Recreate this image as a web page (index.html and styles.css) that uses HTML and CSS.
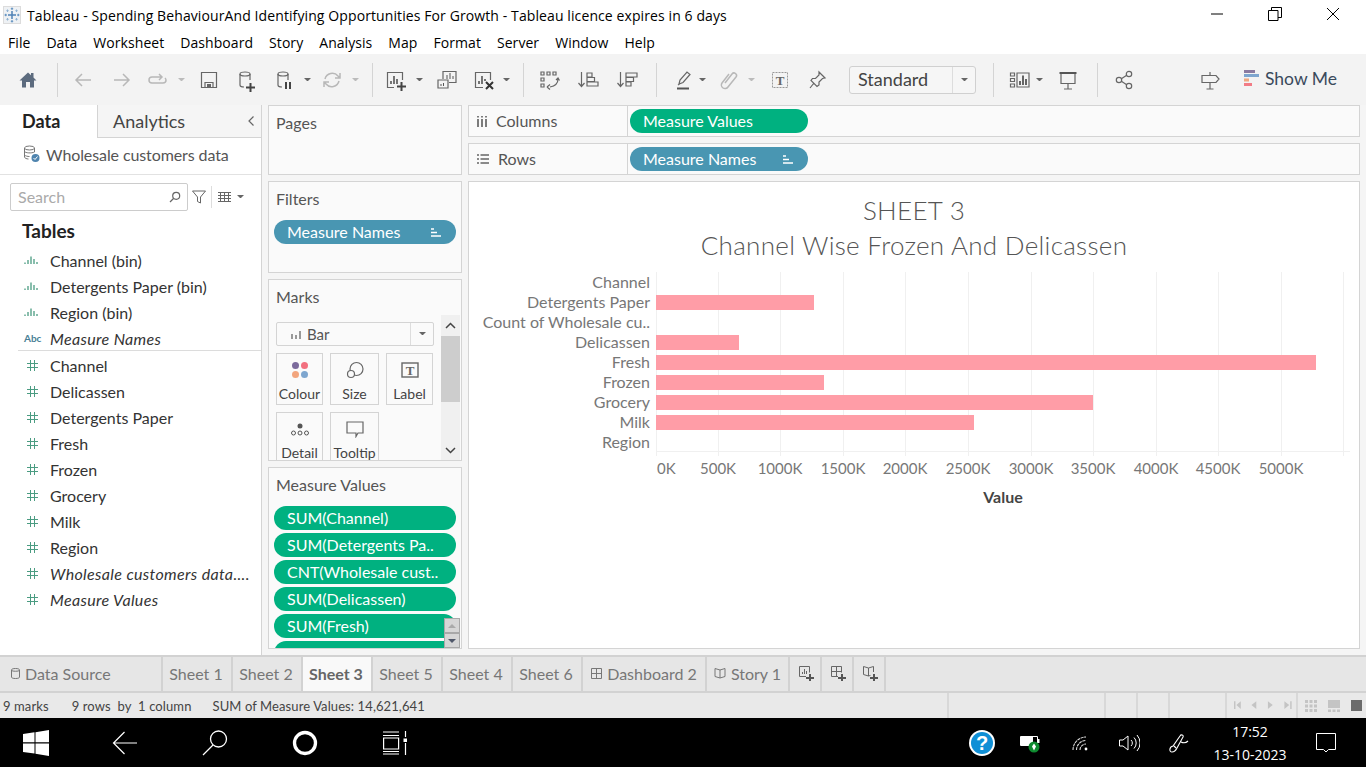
FILE: index.html
```html
<!DOCTYPE html>
<html lang="en">
<head>
  <meta charset="UTF-8">
  <title>Tableau - Spending BehaviourAnd Identifying Opportunities For Growth</title>
  <link rel="stylesheet" href="styles.css">
</head>
<body>
  <header class="titlebar">
    <svg class="app-icon" width="18" height="18" viewBox="0 0 18 18"><rect x="0.5" y="0.5" width="17" height="17" fill="#eef1f4" stroke="#dcdcdc"/><path d="M9 5v8M5 9h8" stroke="#4f81b5" stroke-width="1.500"/><path d="M9 1.500v2.500M7.800 2.700h2.400M9 14v2.500M7.800 15.300h2.400M1.500 9H4M2.700 7.800v2.400M14 9h2.500M15.300 7.800v2.400" stroke="#5f8fbf"/><path d="M4.500 3.500v2.500M3.300 4.700h2.400M13.500 3.500v2.500M12.300 4.700h2.400M4.500 12v2.500M3.300 13.300h2.400M13.500 12v2.500M12.300 13.300h2.400" stroke="#8fb2d3"/></svg>
    <span class="title-text">Tableau - Spending BehaviourAnd Identifying Opportunities For Growth - Tableau licence expires in 6 days</span>
    <div class="win-btns">
      <svg width="14" height="14" viewBox="0 0 14 14"><path d="M1 7h12" stroke="#000" stroke-width="1"/></svg>
      <svg width="14" height="14" viewBox="0 0 14 14"><path d="M.5 3.500h9.500v10H.5zM3.500 3.500V.5h10v10H10" fill="none" stroke="#000"/></svg>
      <svg width="14" height="14" viewBox="0 0 14 14"><path d="M1 1l12 12M13 1L1 13" stroke="#000" stroke-width="1"/></svg>
    </div>
  </header>

  <nav class="menubar">
    <span>File</span><span>Data</span><span>Worksheet</span><span>Dashboard</span><span>Story</span><span>Analysis</span><span>Map</span><span>Format</span><span>Server</span><span>Window</span><span>Help</span>
  </nav>

  <div class="toolbar">
    <svg class="tool ml-16" viewBox="0 0 24 24"><path d="M3.500 12.500L12 4.500l3 2.800V5h2.500v4.600l3 2.900H18V19.500h-4V14h-4v5.500H6v-7z" fill="#5c6b7e"/></svg>
    <i class="sep ml-17"></i>
    <svg class="tool ml-13" viewBox="0 0 24 24"><path d="M20 12H5M11 6l-6 6 6 6" class="st-light"/></svg>
    <svg class="tool ml-15" viewBox="0 0 24 24"><path d="M4 12h15M13 6l6 6-6 6" class="st-light"/></svg>
    <svg class="tool ml-12" viewBox="0 0 24 24"><path d="M15 9H6a3 3 0 0 0 0 6h11a3 3 0 0 0 3-3 3 3 0 0 0-1-2M13 6l3 3-3 3" class="st-light"/></svg>
    <i class="caret caret-light ml-8"></i>
    <svg class="tool ml-9" viewBox="0 0 24 24"><path d="M4.500 4.500h15v15h-15zM8 19.500v-5h8v5" class="st-dark"/><path d="M10 16h4v3.500h-4z" fill="#666"/></svg>
    <svg class="tool ml-14" viewBox="0 0 24 24"><ellipse cx="10" cy="6" rx="5" ry="2" class="st-dark"/><path d="M5 6v11c0 1 1.500 2 4 2M15 6v6" class="st-dark"/><path d="M11 19.500h9M15.500 15v9" stroke="#444" stroke-width="2"/></svg>
    <svg class="tool ml-14" viewBox="0 0 24 24"><ellipse cx="10" cy="6" rx="5" ry="2" class="st-dark"/><path d="M5 6v11c0 1 1.500 2 4 2M15 6v6" class="st-dark"/><path d="M13 14v7M17 14v7" stroke="#444" stroke-width="2"/></svg>
    <i class="caret ml-7"></i>
    <svg class="tool ml-6" viewBox="0 0 24 24"><path d="M5 11a7.500 7.500 0 0 1 13-3l2 2M19 13a7.500 7.500 0 0 1-13 3l-2-2M20 5v5h-5M4 19v-5h5" class="st-light"/></svg>
    <i class="caret caret-light ml-8"></i>
    <i class="sep ml-10"></i>
    <svg class="tool ml-11" viewBox="0 0 24 24"><path d="M10 19.500H3.500v-15h15V12" class="st-dark"/><path d="M7 16v-3M10 16V8M13 16v-5" stroke="#555" stroke-width="1.600"/><path d="M13 18.500h9M17.500 14v9" stroke="#444" stroke-width="2"/></svg>
    <i class="caret ml-8"></i>
    <svg class="tool ml-9" viewBox="0 0 24 24"><path d="M8 11V3.500h13v11h-7" class="st-dark"/><path d="M3 12h10v8H3z" class="st-dark"/><path d="M12 11V7M15 11V5M18 11V8M6 18v-2M8.500 18v-3" stroke="#555"/></svg>
    <svg class="tool ml-13" viewBox="0 0 24 24"><path d="M11 19.500H3.500v-15h15V12" class="st-dark"/><path d="M7 16v-3M10 16V8M13 13v-2" stroke="#555" stroke-width="1.600"/><path d="M14 14l7 7M21 14l-7 7" stroke="#333" stroke-width="2"/></svg>
    <i class="caret ml-7"></i>
    <i class="sep ml-10"></i>
    <svg class="tool ml-13" viewBox="0 0 24 24"><path d="M4 4h3v3H4zM10 4h3v3h-3zM16 4h3v3h-3zM4 10h3v3H4zM4 16h3v3H4z" class="st-dark"/><path d="M21 11c0 4-3 7-8 8M10 19l3-2.500M10 19l3 2.500M19 12l2-2 1.500 2.500" class="st-dark"/></svg>
    <svg class="tool ml-15" viewBox="0 0 24 24"><path d="M5.500 4v14M2.500 15l3 3.500 3-3.500" class="st-dark"/><path d="M11 5h5v4h-5zM11 9.500h7.500v4H11zM11 14h11v4H11z" class="st-dark"/></svg>
    <svg class="tool ml-15" viewBox="0 0 24 24"><path d="M5.500 4v14M2.500 15l3 3.500 3-3.500" class="st-dark"/><path d="M11 5h11v4H11zM11 9.500h7.500v4H11zM11 14h5v4h-5z" class="st-dark"/></svg>
    <i class="sep ml-17"></i>
    <svg class="tool ml-14" viewBox="0 0 24 24"><path d="M8 16l1-4 7-8 3 2.500-7 8zM7 17l1.500-1" class="st-dark"/><path d="M6 20.500h12" stroke="#555" stroke-width="2"/></svg>
    <i class="caret ml-4"></i>
    <svg class="tool ml-8" viewBox="0 0 24 24"><path d="M8 15l7-9a2.500 2.500 0 0 1 4 3l-8 10a3.500 3.500 0 0 1-6-4l7-9" class="st-light"/></svg>
    <i class="caret caret-light ml-7"></i>
    <svg class="tool ml-10" viewBox="0 0 24 24"><rect x="4.500" y="4.500" width="15" height="15" fill="none" stroke="#999" stroke-dasharray="2 1"/><text x="12" y="16.500" class="svg-t">T</text></svg>
    <svg class="tool ml-13" viewBox="0 0 24 24"><path d="M14 4l6 6-2.500.5-3.500 3.500 0 3-2 1.500-6-6 1.500-2 3 0 3.500-3.500zM9 15l-4 5" class="st-dark"/></svg>
    <div class="fit-select ml-20"><span>Standard</span><div class="fit-caret"><i class="caret"></i></div></div>
    <i class="sep ml-17"></i>
    <svg class="tool ml-14" viewBox="0 0 24 24"><path d="M2.500 5h4v3h-4zM2.500 10.500h4v3h-4zM2.500 16h4v3h-4zM9 5h12v14H9z" class="st-dark"/><path d="M12 17v-4M15 17V7.500M18 17v-6" stroke="#555" stroke-width="1.800"/></svg>
    <i class="caret ml-4"></i>
    <svg class="tool ml-10" viewBox="0 0 24 24"><path d="M3.500 5h17" stroke="#555" stroke-width="2"/><path d="M5 6v9.500h14V6M12 15.500V21M8 21h8" class="st-dark"/></svg>
    <i class="sep ml-17"></i>
    <svg class="tool ml-14" viewBox="0 0 24 24"><circle cx="17" cy="6" r="2.700" class="st-dark"/><circle cx="17" cy="18" r="2.700" class="st-dark"/><circle cx="7" cy="12" r="2.700" class="st-dark"/><path d="M9.400 10.700l5.300-3.400M9.400 13.300l5.300 3.400" class="st-dark"/></svg>
    <svg class="tool ml-62" viewBox="0 0 24 24"><path d="M4 7.500h14l3 3.500-3 3.500H4zM12 4v3.500M12 14.500V21M8.500 21h7" class="st-dark"/></svg>
    <div class="show-me">
      <svg width="15" height="17" viewBox="0 0 15 17"><rect x="0" y="0" width="11" height="3" fill="#8b7aa0"/><rect x="0" y="4" width="15" height="3" fill="#7ea6cf"/><rect x="0" y="8.500" width="5" height="3" fill="#f0a77f"/><rect x="0" y="13" width="8" height="3" fill="#f27b85"/></svg>
      <span>Show Me</span>
    </div>
  </div>

  <main class="workspace">
    <aside class="data-pane">
      <div class="pane-tabs">
        <span class="tab-data">Data</span>
        <span class="tab-analytics">Analytics<svg class="collapse" width="8" height="12" viewBox="0 0 8 12"><path d="M6.500 1.500L2 6l4.500 4.500" fill="none" stroke="#666" stroke-width="1.200"/></svg></span>
      </div>
      <div class="source-row">
        <svg width="17" height="18" viewBox="0 0 17 18"><ellipse cx="6.500" cy="3" rx="5" ry="2" fill="none" stroke="#777"/><path d="M1.500 3v9c0 1 2 2 4 2M11.500 3v4M1.500 6.500c1 1.500 7 2 10 .5M1.500 10c1 1 3 1.500 5 1.500" fill="none" stroke="#777"/><circle cx="12.500" cy="13" r="4" fill="#4f84ae"/><path d="M10.500 13l1.500 1.500 2.500-3" fill="none" stroke="#fff"/></svg>
        <span>Wholesale customers data</span>
      </div>
      <div class="search-row">
        <div class="search-box"><span>Search</span><svg width="12" height="12" viewBox="0 0 12 12"><circle cx="7.200" cy="4.800" r="3.500" fill="none" stroke="#666" stroke-width="1.200"/><path d="M4.500 7.500L1 11" stroke="#666" stroke-width="1.200"/></svg></div>
        <svg class="funnel" width="14" height="14" viewBox="0 0 14 14"><path d="M.5 1h13L8.500 7v6l-3-1.500V7z" fill="none" stroke="#666"/></svg>
        <i class="sep-short"></i>
        <svg class="list-icon" width="13" height="10" viewBox="0 0 13 10"><path d="M0 .5h13M0 3.500h13M0 6.500h13M0 9.500h13M2.500 0v10M6.500 0v10M10.500 0v10" stroke="#666" stroke-width="1"/></svg>
        <i class="caret ml-6"></i>
      </div>
      <h2 class="tables-head">Tables</h2>
      <ul class="field-list">
        <li><svg class="bin" viewBox="0 0 16 8"><path d="M1 8V6.500M4 8V4M7 8V0.500M10 8V3M13 8V6" stroke="#4b9c82" stroke-width="1.300"/></svg>Channel (bin)</li>
        <li><svg class="bin" viewBox="0 0 16 8"><path d="M1 8V6.500M4 8V4M7 8V0.500M10 8V3M13 8V6" stroke="#4b9c82" stroke-width="1.300"/></svg>Detergents Paper (bin)</li>
        <li><svg class="bin" viewBox="0 0 16 8"><path d="M1 8V6.500M4 8V4M7 8V0.500M10 8V3M13 8V6" stroke="#4b9c82" stroke-width="1.300"/></svg>Region (bin)</li>
        <li class="calc"><span class="abc">Abc</span>Measure Names</li>
      </ul>
      <ul class="field-list measures">
        <li><svg class="hash" viewBox="0 0 11 11"><path d="M3.500 0v11M7.500 0v11M0 3.500h11M0 7.500h11" stroke="#4b9c82"/></svg>Channel</li>
        <li><svg class="hash" viewBox="0 0 11 11"><path d="M3.500 0v11M7.500 0v11M0 3.500h11M0 7.500h11" stroke="#4b9c82"/></svg>Delicassen</li>
        <li><svg class="hash" viewBox="0 0 11 11"><path d="M3.500 0v11M7.500 0v11M0 3.500h11M0 7.500h11" stroke="#4b9c82"/></svg>Detergents Paper</li>
        <li><svg class="hash" viewBox="0 0 11 11"><path d="M3.500 0v11M7.500 0v11M0 3.500h11M0 7.500h11" stroke="#4b9c82"/></svg>Fresh</li>
        <li><svg class="hash" viewBox="0 0 11 11"><path d="M3.500 0v11M7.500 0v11M0 3.500h11M0 7.500h11" stroke="#4b9c82"/></svg>Frozen</li>
        <li><svg class="hash" viewBox="0 0 11 11"><path d="M3.500 0v11M7.500 0v11M0 3.500h11M0 7.500h11" stroke="#4b9c82"/></svg>Grocery</li>
        <li><svg class="hash" viewBox="0 0 11 11"><path d="M3.500 0v11M7.500 0v11M0 3.500h11M0 7.500h11" stroke="#4b9c82"/></svg>Milk</li>
        <li><svg class="hash" viewBox="0 0 11 11"><path d="M3.500 0v11M7.500 0v11M0 3.500h11M0 7.500h11" stroke="#4b9c82"/></svg>Region</li>
        <li class="calc"><svg class="hash" viewBox="0 0 11 11"><path d="M3.500 0v11M7.500 0v11M0 3.500h11M0 7.500h11" stroke="#4b9c82"/></svg>Wholesale customers data....</li>
        <li class="calc"><svg class="hash" viewBox="0 0 11 11"><path d="M3.500 0v11M7.500 0v11M0 3.500h11M0 7.500h11" stroke="#4b9c82"/></svg>Measure Values</li>
      </ul>
    </aside>

    <section class="cards">
      <div class="card card-pages"><h3>Pages</h3></div>
      <div class="card card-filters">
        <h3>Filters</h3>
        <div class="pill pill-blue"><span>Measure Names</span><svg class="sort-mark" width="10" height="9" viewBox="0 0 10 9"><path d="M0 1h3M0 4.500h6M0 8h10" stroke="#fff" stroke-width="1.400"/></svg></div>
      </div>
      <div class="card card-marks">
        <h3>Marks</h3>
        <div class="marks-body">
          <div class="marks-main">
            <div class="mark-select">
              <svg width="11" height="9" viewBox="0 0 11 9"><path d="M1 9V4h2v5zM5 9V5h2v4zM9 9V1h2v8z" fill="#999"/></svg>
              <span>Bar</span><div class="fit-caret"><i class="caret"></i></div>
            </div>
            <div class="mark-grid">
              <div class="mark-btn"><svg width="18" height="18" viewBox="0 0 18 18"><circle cx="4.500" cy="4.500" r="3.500" fill="#7c6b9c"/><circle cx="13.500" cy="4.500" r="3.500" fill="#f2707f"/><circle cx="4.500" cy="13.500" r="3.500" fill="#f2a57e"/><circle cx="13.500" cy="13.500" r="3.500" fill="#7ea6cf"/></svg><span>Colour</span></div>
              <div class="mark-btn"><svg width="18" height="18" viewBox="0 0 18 18"><circle cx="10.500" cy="8" r="6.500" fill="none" stroke="#666" stroke-width="1.200"/><circle cx="5" cy="13" r="3.500" fill="#fafafa" stroke="#666" stroke-width="1.200"/></svg><span>Size</span></div>
              <div class="mark-btn"><svg width="18" height="18" viewBox="0 0 18 18"><rect x="1" y="2" width="16" height="14" fill="none" stroke="#666" stroke-width="1.400"/><text x="9" y="13.500" class="svg-t">T</text></svg><span>Label</span></div>
              <div class="mark-btn"><svg width="20" height="18" viewBox="0 0 20 18"><circle cx="10" cy="6" r="2.500" fill="#555"/><circle cx="3.500" cy="13" r="2" fill="none" stroke="#555"/><circle cx="10" cy="13" r="2" fill="none" stroke="#555"/><circle cx="16.500" cy="13" r="2" fill="none" stroke="#555"/></svg><span>Detail</span></div>
              <div class="mark-btn"><svg width="18" height="18" viewBox="0 0 18 18"><path d="M1 2h16v11h-5l-2 3.500V13H1z" fill="none" stroke="#666" stroke-width="1.200"/></svg><span>Tooltip</span></div>
            </div>
          </div>
          <div class="scrollbar">
            <svg width="19" height="21" viewBox="0 0 19 21"><path d="M5 13l4.500-4.500L14 13" fill="none" stroke="#444" stroke-width="1.500"/></svg>
            <div class="scroll-thumb"></div>
            <svg class="scroll-down" width="19" height="21" viewBox="0 0 19 21"><path d="M5 8l4.500 4.500L14 8" fill="none" stroke="#444" stroke-width="1.500"/></svg>
          </div>
        </div>
      </div>
      <div class="card card-values">
        <h3>Measure Values</h3>
        <div class="pill-stack">
          <div class="pill pill-green"><span>SUM(Channel)</span></div>
          <div class="pill pill-green"><span>SUM(Detergents Pa..</span></div>
          <div class="pill pill-green"><span>CNT(Wholesale cust..</span></div>
          <div class="pill pill-green"><span>SUM(Delicassen)</span></div>
          <div class="pill pill-green"><span>SUM(Fresh)</span></div>
          <div class="pill pill-green"></div>
        </div>
        <div class="mini-scroll">
          <span><i class="tri-up"></i></span>
          <span><i class="tri-down"></i></span>
        </div>
      </div>
    </section>

    <section class="sheet">
      <div class="shelf">
        <div class="shelf-label"><svg width="10" height="11" viewBox="0 0 10 11"><path d="M1 3v8M5 3v8M9 3v8" stroke="#666" stroke-width="1.700"/><path d="M1 0v1.400M5 0v1.400M9 0v1.400" stroke="#666" stroke-width="1.700"/></svg><span>Columns</span></div>
        <div class="pill pill-green pill-shelf"><span>Measure Values</span></div>
      </div>
      <div class="shelf">
        <div class="shelf-label"><svg width="12" height="10" viewBox="0 0 12 10"><path d="M0 1h2M0 5h2M0 9h2M3.500 1H12M3.500 5H12M3.500 9H12" stroke="#666" stroke-width="1.500"/></svg><span>Rows</span></div>
        <div class="pill pill-blue pill-shelf"><span>Measure Names</span><svg class="sort-mark" width="10" height="9" viewBox="0 0 10 9"><path d="M0 1h3M0 4.500h6M0 8h10" stroke="#fff" stroke-width="1.400"/></svg></div>
      </div>
      <div class="viz">
        <h1 class="viz-title">SHEET 3<br>Channel Wise Frozen And Delicassen</h1>
        <div class="chart">
          <div class="grid-lines">
            <i style="left:0"></i><i style="left:62px"></i><i style="left:124px"></i><i style="left:187px"></i><i style="left:249px"></i><i style="left:312px"></i><i style="left:375px"></i><i style="left:437px"></i><i style="left:500px"></i><i style="left:562px"></i><i style="left:625px"></i><i style="left:687px"></i>
          </div>
          <div class="row"><span class="row-label">Channel</span><div class="bar-cell"></div></div>
          <div class="row"><span class="row-label">Detergents Paper</span><div class="bar-cell"><div class="bar" style="width:158px"></div></div></div>
          <div class="row"><span class="row-label">Count of Wholesale cu..</span><div class="bar-cell"></div></div>
          <div class="row"><span class="row-label">Delicassen</span><div class="bar-cell"><div class="bar" style="width:83px"></div></div></div>
          <div class="row"><span class="row-label">Fresh</span><div class="bar-cell"><div class="bar" style="width:660px"></div></div></div>
          <div class="row"><span class="row-label">Frozen</span><div class="bar-cell"><div class="bar" style="width:168px"></div></div></div>
          <div class="row"><span class="row-label">Grocery</span><div class="bar-cell"><div class="bar" style="width:437px"></div></div></div>
          <div class="row"><span class="row-label">Milk</span><div class="bar-cell"><div class="bar" style="width:318px"></div></div></div>
          <div class="row"><span class="row-label">Region</span><div class="bar-cell"></div></div>
        </div>
        <div class="axis">
          <span class="tick-first" style="left:1px">0K</span>
          <span style="left:62px">500K</span><span style="left:124px">1000K</span><span style="left:187px">1500K</span><span style="left:249px">2000K</span><span style="left:312px">2500K</span><span style="left:375px">3000K</span><span style="left:437px">3500K</span><span style="left:500px">4000K</span><span style="left:562px">4500K</span><span style="left:625px">5000K</span>
        </div>
        <div class="axis-title">Value</div>
      </div>
    </section>
  </main>

  <div class="tabbar">
    <div class="tab tab-source"><svg width="9" height="11" viewBox="0 0 9 11"><path d="M.5 2v7c0 1 1.500 1.500 4 1.500s4-.5 4-1.500V2c0-1-1.500-1.500-4-1.500S.5 1 .5 2zM.5 2.500c1 1 7 1 8 0" fill="none" stroke="#777"/></svg>Data Source</div>
    <div class="tab tab-sheet">Sheet 1</div>
    <div class="tab tab-sheet">Sheet 2</div>
    <div class="tab tab-sheet tab-active">Sheet 3</div>
    <div class="tab tab-sheet">Sheet 5</div>
    <div class="tab tab-sheet">Sheet 4</div>
    <div class="tab tab-sheet">Sheet 6</div>
    <div class="tab tab-dash"><svg width="11" height="11" viewBox="0 0 11 11"><path d="M.5.500h10v10H.5zM5.500.5v10M.5 5.500h10" fill="none" stroke="#777"/></svg>Dashboard 2</div>
    <div class="tab tab-story"><svg width="12" height="11" viewBox="0 0 12 11"><path d="M6 2L1 .5v8L6 10l5-1.500v-8zM6 2v8" fill="none" stroke="#777"/></svg>Story 1</div>
    <div class="tab tab-new"><svg width="16" height="15" viewBox="0 0 16 15"><path d="M7 10.500H.5V.5h10v6" fill="none" stroke="#666"/><path d="M3.500 8V6M5.500 8V3M7.500 8V5" stroke="#666"/><path d="M7 12h8M11 8v7" stroke="#555" stroke-width="2"/></svg></div>
    <div class="tab tab-new"><svg width="16" height="15" viewBox="0 0 16 15"><path d="M7 10.500H.5V.5h10v6M5.500.5v10M.5 5.500h10" fill="none" stroke="#666"/><path d="M7 12h8M11 8v7" stroke="#555" stroke-width="2"/></svg></div>
    <div class="tab tab-new"><svg width="16" height="15" viewBox="0 0 16 15"><path d="M5.500 2L.5.500v8l5 1.500 2-.6M5.500 2l5-1.500V6M5.500 2v8" fill="none" stroke="#666"/><path d="M7 12h8M11 8v7" stroke="#555" stroke-width="2"/></svg></div>
  </div>

  <div class="statusbar">
    <span class="st-marks">9 marks</span>
    <span class="st-rows">9 rows&nbsp; by&nbsp; 1 column</span>
    <span class="st-sum">SUM of Measure Values: 14,621,641</span>
    <div class="st-cells">
      <i class="cell cell-a"></i><i class="cell cell-b"></i><i class="cell cell-c"></i>
      <i class="cell cell-d"></i>
      <div class="cell cell-nav">
        <svg width="64" height="9" viewBox="0 0 64 9" fill="#c4c4c4"><path d="M0 0h1.500v8H0zM7 0v8L2.500 4zM23 0v8l-5-4zM35 0v8l5-4zM52 0v8l5-4zM58 0h1.500v8H58z"/></svg>
      </div>
      <div class="cell cell-views">
        <svg width="12" height="12" viewBox="0 0 12 12" fill="#c4c4c4"><path d="M0 0h3v3H0zM4.500 0h3v3h-3zM9 0h3v3H9zM0 4.500h3v3H0zM4.500 4.500h3v3h-3zM9 4.500h3v3H9zM0 9h3v3H0zM4.500 9h3v3h-3zM9 9h3v3H9z"/></svg>
        <svg width="12" height="12" viewBox="0 0 12 12" fill="#c4c4c4"><path d="M0 0h12v8H0zM0 9.500h3V12H0zM4.500 9.500h3V12h-3zM9 9.500h3V12H9z"/></svg>
        <svg width="11" height="11" viewBox="0 0 11 11"><path d="M0 0h11v11H0z" fill="#6b6b6b"/></svg>
      </div>
    </div>
  </div>

  <footer class="taskbar">
    <svg class="tk-start" width="26" height="26" viewBox="0 0 26 26" fill="#fff"><path d="M0 4l11.500-1.700v10H0zM12.500 2.200L26 0v12.300H12.500zM0 13.500h11.500v10L0 22zM12.500 13.500H26V26l-13.500-2.200z"/></svg>
    <svg class="tk-back" width="26" height="24" viewBox="0 0 26 24"><path d="M25 12H1.500M12.500 1L1.500 12l11 11" fill="none" stroke="#fff" stroke-width="1.200"/></svg>
    <svg class="tk-search" width="26" height="26" viewBox="0 0 26 26"><circle cx="16.500" cy="9" r="8" fill="none" stroke="#fff" stroke-width="1.300"/><path d="M11 15L1 25" stroke="#fff" stroke-width="1.300"/></svg>
    <svg class="tk-circle" width="26" height="26" viewBox="0 0 26 26"><circle cx="13" cy="13" r="10.500" fill="none" stroke="#fff" stroke-width="3.300"/></svg>
    <svg class="tk-view" width="26" height="24" viewBox="0 0 26 24"><path d="M0 1h16M0 23h16M.6 7h15v11H.6zM0 4.500h16M0 20.500h16M22.500 0v6M22.500 12v12" fill="none" stroke="#fff" stroke-width="1.200"/><rect x="20.500" y="7.500" width="3.500" height="3.500" fill="#fff"/></svg>
    <div class="tray">
      <svg class="tr-help" width="28" height="28" viewBox="0 0 28 28"><circle cx="14" cy="14" r="13" fill="#fff"/><circle cx="14" cy="14" r="11" fill="#0f8fd6"/><text x="14" y="21" class="svg-q">?</text></svg>
      <svg class="tr-batt" width="20" height="20" viewBox="0 0 20 20"><path d="M.5 3.500h17v9H.5z" fill="none" stroke="#fff"/><path d="M1 4h12v8H1z" fill="#fff"/><path d="M18 6h1.500v4H18z" fill="#fff"/><circle cx="14" cy="14" r="5.500" fill="#0e8a2f"/><path d="M14 10.500l2 3-2 4-2-4z" fill="#fff"/></svg>
      <svg class="tr-wifi" width="16" height="16" viewBox="0 0 16 16"><circle cx="14" cy="14" r="1.400" fill="#fff"/><path d="M1 15a13 13 0 0 1 13-13M4.500 15a9.500 9.500 0 0 1 9.500-9.500M8 15a6 6 0 0 1 6-6" fill="none" stroke="#ddd" stroke-width="1.100" stroke-dasharray="3 .7"/></svg>
      <svg class="tr-sound" width="21" height="18" viewBox="0 0 21 18"><path d="M.5 6v6H4l5 4V2L4 6z" fill="none" stroke="#fff" stroke-width="1"/><path d="M12 6a4 4 0 0 1 0 6M15 3.500a8 8 0 0 1 0 11M18 1a12 12 0 0 1 0 16" fill="none" stroke="#fff" stroke-width="1"/></svg>
      <svg class="tr-pen" width="20" height="20" viewBox="0 0 20 20"><path d="M3 19c-3 0-3-5 1-6l7-10c1-2 4-1 3 1L8 15c-1 2-3 4-5 4zM12 9c2 1 5 1 7-1M5 13l2 2" fill="none" stroke="#fff" stroke-width="1.100"/></svg>
      <div class="clock"><span>17:52</span><span>13-10-2023</span></div>
      <svg class="tr-note" width="20" height="20" viewBox="0 0 20 20"><path d="M.5.500h19v16h-7l-2.500 2.500-2.500-2.500h-7z" fill="none" stroke="#fff"/></svg>
    </div>
  </footer>
</body>
</html>
```

FILE: styles.css
```css
* {
  box-sizing: border-box;
}

html, body {
  margin: 0;
  height: 767px;
  overflow: hidden;
}

body {
  display: flex;
  flex-direction: column;
  width: 1366px;
  background: #f5f5f5;
  font-family: Lato, "Open Sans", sans-serif;
  font-size: 16px;
  color: #333;
}

h1, h2, h3, ul {
  margin: 0;
  padding: 0;
  font-weight: normal;
}

i {
  display: block;
  font-style: normal;
}

/* window chrome */
.titlebar {
  height: 30px;
  display: flex;
  align-items: center;
  background: #fff;
  padding-left: 3px;
  font-family: "Open Sans", sans-serif;
  font-size: 14px;
  letter-spacing: 0.1px;
  color: #000;
}

.app-icon {
  margin-right: 6px;
  flex: none;
}

.win-btns {
  margin-left: auto;
  display: flex;
  gap: 44px;
  padding-right: 26px;
  margin-top: -2px;
}

.menubar {
  height: 24px;
  display: flex;
  align-items: center;
  gap: 16px;
  padding-left: 8px;
  background: #fff;
  font-family: "Open Sans", sans-serif;
  font-size: 14px;
  letter-spacing: 0.06px;
  color: #000;
}

/* toolbar */
.toolbar {
  height: 51px;
  display: flex;
  align-items: center;
  background: #f3f3f3;
}

.tool {
  width: 24px;
  height: 24px;
  flex: none;
}

.st-light {
  fill: none;
  stroke: #b8b8b8;
  stroke-width: 1.5;
}

.st-dark {
  fill: none;
  stroke: #666;
  stroke-width: 1.2;
}

.svg-t {
  font-family: "Liberation Serif", serif;
  font-size: 13px;
  font-weight: bold;
  text-anchor: middle;
  fill: #666;
}

.svg-q {
  font-family: "Liberation Sans", sans-serif;
  font-size: 20px;
  font-weight: bold;
  text-anchor: middle;
  fill: #fff;
}

.sep {
  width: 1px;
  height: 34px;
  background: #d4d4d4;
  flex: none;
}

.caret {
  width: 7px;
  height: 3.5px;
  flex: none;
  border-left: 3.5px solid transparent;
  border-right: 3.5px solid transparent;
  border-top: 3.5px solid #666;
  margin-right: 3px;
}

.caret-light {
  border-top-color: #bbb;
}

.ml-4 { margin-left: 4px; }
.ml-6 { margin-left: 6px; }
.ml-7 { margin-left: 7px; }
.ml-8 { margin-left: 8px; }
.ml-9 { margin-left: 9px; }
.ml-10 { margin-left: 10px; }
.ml-11 { margin-left: 11px; }
.ml-12 { margin-left: 12px; }
.ml-13 { margin-left: 13px; }
.ml-14 { margin-left: 14px; }
.ml-15 { margin-left: 15px; }
.ml-16 { margin-left: 16px; }
.ml-17 { margin-left: 17px; }
.ml-20 { margin-left: 20px; }
.ml-62 { margin-left: 62px; }

.fit-select {
  width: 127px;
  height: 28px;
  display: flex;
  align-items: center;
  justify-content: space-between;
  flex: none;
  border: 1px solid #d0d0d0;
  border-radius: 3px;
  background: #f6f6f6;
  padding-left: 8px;
  font-size: 18px;
  color: #444;
}

.fit-select span {
  margin-top: -2px;
}

.fit-caret {
  width: 23px;
  height: 100%;
  display: flex;
  align-items: center;
  justify-content: center;
  border-left: 1px solid #ddd;
}

.fit-caret .caret {
  margin-right: 0;
}

.show-me {
  display: flex;
  align-items: center;
  gap: 6px;
  margin-left: 22px;
  padding-bottom: 3px;
  font-size: 17.5px;
  color: #3a4a5c;
}

/* main area */
.workspace {
  height: 550px;
  display: grid;
  grid-template-columns: 262px 194px 892px;
  gap: 6px;
}

.data-pane {
  background: #fff;
  border-right: 1px solid #d4d4d4;
  height: 550px;
}

.pane-tabs {
  height: 33px;
  display: flex;
}

.tab-data {
  width: 97px;
  padding: 5px 0 0 22px;
  font-size: 18px;
  font-weight: bold;
  color: #222;
}

.tab-analytics {
  flex: 1;
  display: flex;
  justify-content: space-between;
  background: #f5f5f5;
  border-left: 1px solid #d4d4d4;
  border-bottom: 1px solid #d4d4d4;
  padding: 5px 6px 0 15px;
  font-size: 18px;
  color: #444;
}

.collapse {
  margin-top: 5px;
}

.source-row {
  height: 37px;
  display: flex;
  align-items: center;
  gap: 6px;
  padding: 0 0 4px 23px;
  border-bottom: 1px solid #e2e2e2;
  letter-spacing: -0.1px;
  color: #555;
}

.search-row {
  display: flex;
  align-items: center;
  padding: 8px 0 0 10px;
}

.search-box {
  width: 178px;
  height: 28px;
  display: flex;
  align-items: center;
  justify-content: space-between;
  border: 1px solid #ccc;
  border-radius: 2px;
  padding: 0 6px 0 7px;
  color: #aaa;
}

.search-box span {
  margin-top: -2px;
}

.funnel {
  margin-left: 4px;
}

.sep-short {
  width: 1px;
  height: 22px;
  background: #ddd;
  margin-left: 5px;
}

.list-icon {
  margin-left: 6px;
}

.tables-head {
  padding: 8px 0 0 22px;
  height: 36px;
  font-size: 19px;
  font-weight: bold;
  color: #222;
}

.field-list {
  list-style: none;
}

.field-list li {
  height: 26px;
  display: flex;
  align-items: center;
  white-space: nowrap;
}

.field-list .calc {
  font-style: italic;
  letter-spacing: 0.35px;
}

.measures {
  margin: -1px 0 0 18px;
  border-top: 1px solid #dcdcdc;
  padding-top: 1px;
}

.measures li {
  margin-left: -18px;
}

.bin {
  width: 16px;
  height: 8px;
  margin: 0 10px 0 24px;
  flex: none;
}

.abc {
  width: 26px;
  margin-left: 24px;
  font-size: 10px;
  font-style: normal;
  font-weight: bold;
  letter-spacing: 0;
  color: #4a7f96;
}

.hash {
  width: 11px;
  height: 11px;
  margin: 0 12px 0 27px;
  flex: none;
}

/* cards column */
.cards {
  display: flex;
  flex-direction: column;
  gap: 6px;
}

.card {
  position: relative;
  background: #fafafa;
  border: 1px solid #d4d4d4;
  overflow: hidden;
}

.card h3 {
  height: 26px;
  padding: 8px 0 0 7px;
  font-size: 16px;
  line-height: 18px;
  color: #555;
}

.card-pages {
  height: 70px;
}

.card-filters {
  height: 92px;
}

.card-marks {
  height: 182px;
}

.card-values {
  height: 182px;
}

.pill {
  height: 24px;
  display: flex;
  align-items: center;
  justify-content: space-between;
  border-radius: 12px;
  padding: 0 13px;
  color: #fff;
  font-size: 16px;
  white-space: nowrap;
}

.pill span {
  margin-top: -2px;
}

.pill-blue {
  background: #4996b2;
}

.pill-green {
  background: #00b180;
}

.sort-mark {
  margin-right: 2px;
}

.card-filters .pill {
  margin: 12px 5px 0;
}

.marks-body {
  display: flex;
  margin-top: 9px;
}

.marks-main {
  width: 172px;
  padding: 7px 0 0 7px;
}

.mark-select {
  width: 158px;
  height: 24px;
  display: flex;
  align-items: center;
  gap: 6px;
  border: 1px solid #d4d4d4;
  border-radius: 2px;
  padding-left: 13px;
  font-size: 15px;
  color: #555;
}

.mark-select .fit-caret {
  margin-left: auto;
}

.mark-grid {
  display: grid;
  grid-template-columns: 47px 49px 47px;
  grid-auto-rows: 52px;
  gap: 7px;
  margin-top: 7px;
}

.mark-btn {
  display: flex;
  flex-direction: column;
  align-items: center;
  gap: 6px;
  border: 1px solid #d4d4d4;
  padding-top: 7px;
  font-size: 14px;
  color: #444;
}

.scrollbar {
  width: 19px;
  height: 146px;
  display: flex;
  flex-direction: column;
  background: #f0f0f0;
}

.scroll-thumb {
  height: 66px;
  background: #cdcdcd;
}

.scroll-down {
  margin-top: auto;
}

.pill-stack {
  display: flex;
  flex-direction: column;
  gap: 3px;
  margin: 12px 5px 0;
}

.mini-scroll {
  position: absolute;
  right: 1px;
  bottom: 0;
  width: 16px;
  height: 30px;
  display: flex;
  flex-direction: column;
}

.mini-scroll span {
  flex: 1;
  display: flex;
  align-items: center;
  justify-content: center;
  background: #d6d6d6;
  border: 1px solid #a8a8a8;
}

.tri-up {
  border-left: 4px solid transparent;
  border-right: 4px solid transparent;
  border-bottom: 4px solid #aaa;
}

.tri-down {
  border-left: 4px solid transparent;
  border-right: 4px solid transparent;
  border-top: 4px solid #50586a;
}

/* shelves and viz */
.sheet {
  display: flex;
  flex-direction: column;
  gap: 6px;
}

.shelf {
  height: 32px;
  display: flex;
  align-items: center;
  background: #fafafa;
  border: 1px solid #d4d4d4;
}

.shelf-label {
  width: 159px;
  height: 100%;
  display: flex;
  align-items: center;
  gap: 9px;
  padding-left: 8px;
  border-right: 1px solid #d4d4d4;
  color: #555;
}

.shelf-label span {
  margin-top: -2px;
}

.pill-shelf {
  width: 178px;
  margin-left: 2px;
}

.viz {
  height: 468px;
  background: #fff;
  border: 1px solid #d4d4d4;
}

.viz-title {
  padding-top: 11px;
  height: 90px;
  text-align: center;
  font-size: 26px;
  font-weight: 300;
  line-height: 35px;
  letter-spacing: 0.3px;
  color: #555;
}

.chart {
  position: relative;
  width: 881px;
}

.row {
  height: 20px;
  display: flex;
  align-items: center;
}

.row-label {
  width: 181px;
  margin-top: -2px;
  text-align: right;
  color: #777;
  white-space: nowrap;
}

.bar-cell {
  margin-left: 6px;
  position: relative;
}

.bar {
  height: 15px;
  background: #ff9da7;
}

.grid-lines {
  position: absolute;
  left: 187px;
  top: 0;
  right: 0;
  bottom: 0;
  border-bottom: 1px solid #f0f0f0;
}

.grid-lines i {
  position: absolute;
  top: 0;
  bottom: -5px;
  width: 1px;
  background: #f0f0f0;
}

.axis {
  position: relative;
  height: 35px;
  margin-left: 187px;
  font-size: 15px;
  color: #777;
}

.axis span {
  position: absolute;
  top: 7px;
  transform: translateX(-50%);
}

.axis .tick-first {
  transform: none;
}

.axis-title {
  margin-left: 187px;
  width: 694px;
  text-align: center;
  font-weight: bold;
  font-size: 16px;
  color: #444;
}

/* sheet tabs */
.tabbar {
  height: 38px;
  display: flex;
  background: #e6e6e6;
  border-top: 2px solid #d2d2d2;
  border-bottom: 2px solid #d2d2d2;
  color: #777;
}

.tab {
  display: flex;
  align-items: center;
  justify-content: center;
  gap: 5px;
  padding-bottom: 2px;
  border-right: 2px solid #d2d2d2;
  flex: none;
}

.tab-source {
  width: 163px;
  justify-content: flex-start;
  padding-left: 11px;
}

.tab-sheet {
  width: 70px;
  padding-right: 2px;
}

.tab-active {
  background: #f9f9f9;
  font-weight: bold;
  color: #666;
}

.tab-dash {
  width: 124px;
}

.tab-story {
  width: 83px;
}

.tab-new {
  width: 32px;
  padding-left: 3px;
}

.statusbar {
  height: 25px;
  display: flex;
  align-items: center;
  background: #e9e9e9;
  font-size: 13px;
  letter-spacing: 0.1px;
  color: #444;
}

.st-marks {
  margin-left: 3px;
}

.st-rows {
  margin-left: 23px;
}

.st-sum {
  margin-left: 21px;
}

.st-cells {
  margin-left: auto;
  height: 100%;
  display: flex;
}

.cell {
  height: 100%;
  border-left: 2px solid #d8d8d8;
}

.cell-a { width: 157px; }
.cell-b { width: 32px; }
.cell-c { width: 32px; }
.cell-d { width: 57px; }

.cell-nav {
  width: 71px;
  display: flex;
  align-items: center;
  padding-left: 7px;
}

.cell-views {
  width: 70px;
  display: flex;
  align-items: center;
  gap: 11px;
  padding-left: 7px;
}

/* windows taskbar */
.taskbar {
  height: 49px;
  display: flex;
  align-items: center;
  background: #000;
  color: #fff;
}

.tk-start { margin-left: 23px; }
.tk-back { margin-left: 63px; }
.tk-search { margin-left: 64px; }
.tk-circle { margin-left: 64px; }
.tk-view { margin-left: 65px; }

.tray {
  margin-left: auto;
  display: flex;
  align-items: center;
  padding-right: 30px;
}

.tr-batt { margin-left: 24px; }
.tr-wifi { margin-left: 32px; }
.tr-sound { margin-left: 31px; }
.tr-pen { margin-left: 29px; }

.clock {
  width: 80px;
  margin-left: 21px;
  display: flex;
  flex-direction: column;
  align-items: center;
  gap: 4px;
  font-family: "Open Sans", sans-serif;
  font-size: 14px;
  line-height: 19px;
}

.tr-note { margin-left: 26px; }
```
